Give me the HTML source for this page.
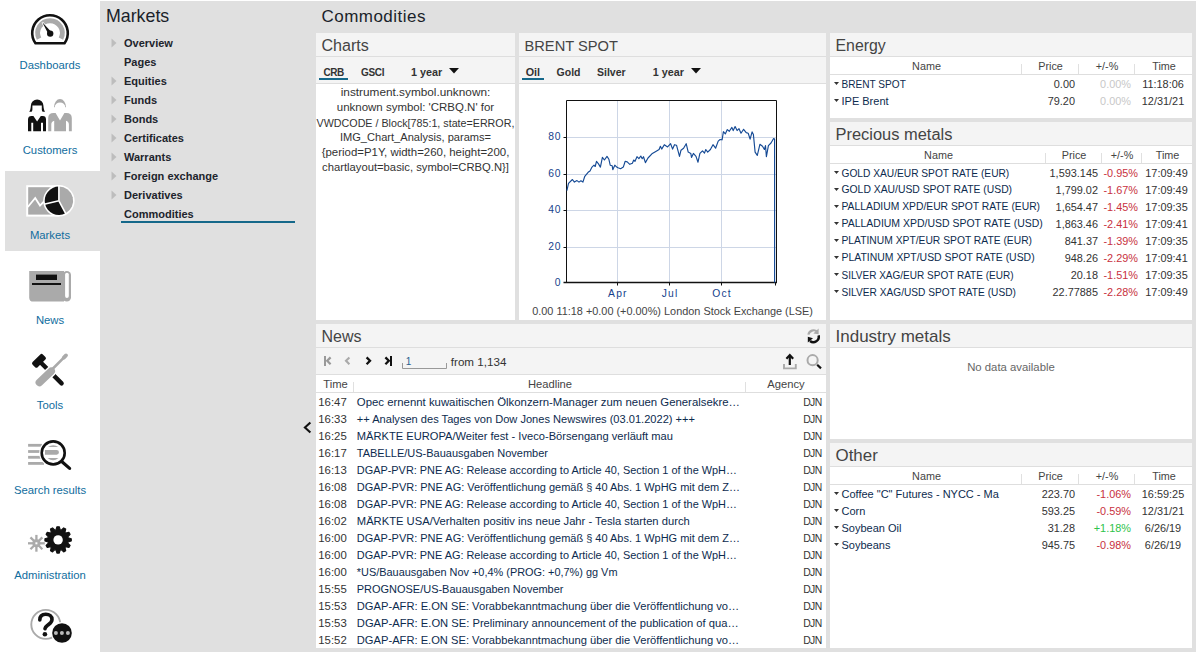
<!DOCTYPE html><html><head><meta charset="utf-8"><style>
html,body{margin:0;padding:0;}
body{width:1196px;height:652px;overflow:hidden;position:relative;background:#e0e0e0;font-family:"Liberation Sans",sans-serif;}
.t{position:absolute;white-space:nowrap;}
.r{position:absolute;}
svg{position:absolute;overflow:visible;}
</style></head><body>
<div class="r" style="left:0px;top:0px;width:100px;height:652px;background:#fff;"></div>
<div class="r" style="left:100px;top:0px;width:1096px;height:1px;background:#fff;"></div>
<div class="r" style="left:5px;top:171px;width:95px;height:80px;background:#e0e0e0;"></div>
<div class="t" style="left:-200px;width:500px;text-align:center;top:60.23px;font-size:11.3px;line-height:11.3px;color:#106d9e;font-weight:normal;">Dashboards</div>
<div class="t" style="left:-200px;width:500px;text-align:center;top:145.23px;font-size:11.3px;line-height:11.3px;color:#106d9e;font-weight:normal;">Customers</div>
<div class="t" style="left:-200px;width:500px;text-align:center;top:230.23px;font-size:11.3px;line-height:11.3px;color:#106d9e;font-weight:normal;">Markets</div>
<div class="t" style="left:-200px;width:500px;text-align:center;top:315.23px;font-size:11.3px;line-height:11.3px;color:#106d9e;font-weight:normal;">News</div>
<div class="t" style="left:-200px;width:500px;text-align:center;top:400.23px;font-size:11.3px;line-height:11.3px;color:#106d9e;font-weight:normal;">Tools</div>
<div class="t" style="left:-200px;width:500px;text-align:center;top:485.23px;font-size:11.3px;line-height:11.3px;color:#106d9e;font-weight:normal;">Search results</div>
<div class="t" style="left:-200px;width:500px;text-align:center;top:570.23px;font-size:11.3px;line-height:11.3px;color:#106d9e;font-weight:normal;">Administration</div>
<svg style="left:0;top:0" width="100" height="652">
<path d="M35.48 43.3 A17.8 17.8 0 1 1 64.52 43.3 Z" fill="#fff" stroke="#111" stroke-width="2.6" stroke-linejoin="round"/>
<path d="M39.04 38.58 A12.3 12.3 0 1 1 60.96 38.58" fill="none" stroke="#aaa" stroke-width="4.9"/>
<path d="M42.3 22.3 L51.6 32.2 L48.6 34.6 Z" fill="#fff" stroke="#fff" stroke-width="1.6"/><path d="M42.3 22.3 L51.6 32.2 L48.6 34.6 Z" fill="#111"/><circle cx="50.2" cy="33.6" r="3.2" fill="#111"/>
<path d="M29.2 111.8 C30.2 110.6 30.7 108.6 30.9 105.6 A6.25 6.1 0 0 1 43.4 105.6 C43.6 108.6 44.1 110.6 45.1 111.8 L42.6 111.8 C42.1 111.2 41.8 110.6 41.8 109.6 L41.8 105.6 L32.4 105.6 L32.4 109.6 C32.4 110.6 32.1 111.2 31.6 111.8 Z" fill="#111"/>
<path d="M28 131.2 L28 119.4 C28 117.2 29.4 116 31.4 116 L33.4 116 L37.1 121.4 L40.8 116 L42.8 116 C44.8 116 46 117.2 46 119.4 L46 131.2 L43 131.2 L43 122.8 L41 122.8 L41 131.2 L33.2 131.2 L33.2 122.8 L31.3 122.8 L31.3 131.2 Z" fill="#111"/>
<path d="M54 107.2 A6 8.2 0 0 1 66 107.2 L65.2 107.2 A5.2 4.8 0 0 0 54.8 107.2 Z" fill="#aaa"/>
<path d="M48.2 131.2 L48.2 118 C48.2 114.8 50.2 113 53.4 113 L55.6 113 L60 120.4 L64.4 113 L66.6 113 C69.8 113 71.8 114.8 71.8 118 L71.8 131.2 L68.9 131.2 L68.9 124.5 C68.9 122.5 67.6 121.2 66 120.8 L66 131.2 L54.2 131.2 L54.2 120.8 C52.6 121.2 51.3 122.5 51.3 124.5 L51.3 131.2 Z" fill="#aaa"/>
<rect x="26.2" y="185.2" width="33" height="31.4" fill="#fff"/><rect x="28.2" y="187.2" width="30" height="27.4" fill="#aaa"/>
<path d="M27.8 207 L35.2 198 L40 205.6 L44 201.5" fill="none" stroke="#fff" stroke-width="1.8"/>
<circle cx="58.9" cy="200.8" r="15.7" fill="#fff"/>
<path d="M58.9 200.8 L58.90 186.60 A14.2 14.2 0 0 1 65.57 213.34 Z" fill="#aaa"/>
<path d="M58.9 200.8 L65.57 213.34 A14.2 14.2 0 0 1 45.06 203.99 Z" fill="#111"/>
<path d="M58.9 200.8 L45.06 203.99 A14.2 14.2 0 0 1 58.90 186.60 Z" fill="#111"/>
<line x1="58.9" y1="200.8" x2="58.90" y2="185.60" stroke="#fff" stroke-width="1.6"/>
<line x1="58.9" y1="200.8" x2="66.04" y2="214.22" stroke="#fff" stroke-width="1.6"/>
<line x1="58.9" y1="200.8" x2="44.09" y2="204.22" stroke="#fff" stroke-width="1.6"/>
<path d="M29.2 270.9 L64 270.9 L64 301.6 L33.4 301.6 Q29.2 301.6 29.2 297.4 Z" fill="#aaa"/>
<rect x="62.6" y="270.9" width="8.4" height="30.7" rx="4.2" fill="#aaa"/>
<rect x="65.1" y="272.7" width="3.7" height="25.2" rx="1.85" fill="#fff"/>
<rect x="36" y="274.6" width="21" height="5.4" fill="#111"/><rect x="32" y="283" width="29" height="2" fill="#111"/>
<rect x="-7.25" y="-3.6" width="14.5" height="7.2" rx="1.8" fill="#111" transform="translate(39,360.8) rotate(-45)"/>
<line x1="40" y1="361.8" x2="61.6" y2="383.4" stroke="#111" stroke-width="4.4" stroke-linecap="round"/>
<line x1="65.4" y1="356" x2="50.5" y2="371" stroke="#fff" stroke-width="5.6" stroke-linecap="round"/>
<line x1="51.2" y1="371.2" x2="39.4" y2="382.4" stroke="#fff" stroke-width="10.4" stroke-linecap="round"/>
<line x1="65.6" y1="355.8" x2="50.5" y2="371" stroke="#aaa" stroke-width="2.6" stroke-linecap="round"/>
<line x1="66" y1="355.4" x2="63.8" y2="357.6" stroke="#aaa" stroke-width="3.8" stroke-linecap="round"/>
<line x1="51.2" y1="371.2" x2="39.4" y2="382.4" stroke="#aaa" stroke-width="7.6" stroke-linecap="round"/>
<rect x="28.1" y="443.9" width="13.9" height="2.8" fill="#aaa"/>
<rect x="28.1" y="450.1" width="13.9" height="2.8" fill="#aaa"/>
<rect x="28.1" y="455.9" width="13.9" height="2.8" fill="#aaa"/>
<rect x="28.1" y="462.0" width="15.9" height="2.8" fill="#aaa"/>
<circle cx="53.2" cy="452.9" r="14" fill="#fff"/>
<path d="M47.9 446.9 Q53.2 443.4 58.4 446.9 Z" fill="#aaa"/>
<path d="M45 450 L56.6 450 A2.35 2.35 0 0 1 56.6 454.7 L45 454.7 Z" fill="#aaa"/>
<path d="M47.5 458 L58.5 458 Q53 462.4 47.5 458 Z" fill="#aaa"/>
<circle cx="53.2" cy="452.9" r="11.5" fill="none" stroke="#111" stroke-width="2.6"/>
<line x1="62" y1="461.8" x2="69.6" y2="468.4" stroke="#111" stroke-width="3.2" stroke-linecap="round"/>
<line x1="36.4" y1="543.3" x2="44.80" y2="543.30" stroke="#aaa" stroke-width="2.3"/><line x1="36.4" y1="543.3" x2="42.34" y2="549.24" stroke="#aaa" stroke-width="2.3"/><line x1="36.4" y1="543.3" x2="36.40" y2="551.70" stroke="#aaa" stroke-width="2.3"/><line x1="36.4" y1="543.3" x2="30.46" y2="549.24" stroke="#aaa" stroke-width="2.3"/><line x1="36.4" y1="543.3" x2="28.00" y2="543.30" stroke="#aaa" stroke-width="2.3"/><line x1="36.4" y1="543.3" x2="30.46" y2="537.36" stroke="#aaa" stroke-width="2.3"/><line x1="36.4" y1="543.3" x2="36.40" y2="534.90" stroke="#aaa" stroke-width="2.3"/><line x1="36.4" y1="543.3" x2="42.34" y2="537.36" stroke="#aaa" stroke-width="2.3"/>
<circle cx="36.4" cy="543.3" r="4" fill="#aaa"/><rect x="35.4" y="542.3" width="2" height="2" fill="#fff"/>
<path d="M55.98 529.92 L56.95 526.75 L59.25 526.75 L60.22 529.92 L61.25 530.20 L63.68 527.94 L65.67 529.09 L64.93 532.32 L65.68 533.07 L68.91 532.33 L70.06 534.32 L67.80 536.75 L68.08 537.78 L71.25 538.75 L71.25 541.05 L68.08 542.02 L67.80 543.05 L70.06 545.48 L68.91 547.47 L65.68 546.73 L64.93 547.48 L65.67 550.71 L63.68 551.86 L61.25 549.60 L60.22 549.88 L59.25 553.05 L56.95 553.05 L55.98 549.88 L54.95 549.60 L52.52 551.86 L50.53 550.71 L51.27 547.48 L50.52 546.73 L47.29 547.47 L46.14 545.48 L48.40 543.05 L48.12 542.02 L44.95 541.05 L44.95 538.75 L48.12 537.78 L48.40 536.75 L46.14 534.32 L47.29 532.33 L50.52 533.07 L51.27 532.32 L50.53 529.09 L52.52 527.94 L54.95 530.20 Z" fill="#111" stroke="#111" stroke-width="1.2" stroke-linejoin="round"/><circle cx="58.1" cy="539.9" r="4.7" fill="#fff"/>
<circle cx="45.8" cy="624.4" r="14.5" fill="none" stroke="#aaa" stroke-width="1.9"/>
<path d="M39.8 620 C39.8 616.2 42.2 614.2 45.8 614.2 C49.4 614.2 52 616.4 52 619.4 C52 622.4 49.6 623.6 47.6 625.2 C46 626.4 45.2 627.4 45 628.6" fill="none" stroke="#111" stroke-width="3.6" stroke-linecap="round"/>
<circle cx="44.9" cy="634.2" r="2.3" fill="#111"/>
<circle cx="62" cy="633" r="11" fill="#fff"/><circle cx="62" cy="633" r="9.8" fill="#111"/>
<circle cx="55.9" cy="633" r="2" fill="#bbb"/>
<circle cx="61.9" cy="633" r="2" fill="#bbb"/>
<circle cx="67.9" cy="633" r="2" fill="#bbb"/>
</svg>
<div class="t" style="left:106px;top:7.93px;font-size:17.8px;line-height:17.8px;color:#1a1f2a;font-weight:normal;">Markets</div>
<div class="t" style="left:124px;top:37.69px;font-size:11px;line-height:11px;color:#20242c;font-weight:bold;">Overview</div>
<svg style="left:111px;top:37.7px" width="6" height="10"><path d="M0.5 0.5 L5.5 5 L0.5 9.5 Z" fill="#bdbdbd"/></svg>
<div class="t" style="left:124px;top:56.69px;font-size:11px;line-height:11px;color:#20242c;font-weight:bold;">Pages</div>
<div class="t" style="left:124px;top:75.69px;font-size:11px;line-height:11px;color:#20242c;font-weight:bold;">Equities</div>
<svg style="left:111px;top:75.7px" width="6" height="10"><path d="M0.5 0.5 L5.5 5 L0.5 9.5 Z" fill="#bdbdbd"/></svg>
<div class="t" style="left:124px;top:94.69px;font-size:11px;line-height:11px;color:#20242c;font-weight:bold;">Funds</div>
<svg style="left:111px;top:94.7px" width="6" height="10"><path d="M0.5 0.5 L5.5 5 L0.5 9.5 Z" fill="#bdbdbd"/></svg>
<div class="t" style="left:124px;top:113.69px;font-size:11px;line-height:11px;color:#20242c;font-weight:bold;">Bonds</div>
<svg style="left:111px;top:113.7px" width="6" height="10"><path d="M0.5 0.5 L5.5 5 L0.5 9.5 Z" fill="#bdbdbd"/></svg>
<div class="t" style="left:124px;top:132.69px;font-size:11px;line-height:11px;color:#20242c;font-weight:bold;">Certificates</div>
<svg style="left:111px;top:132.7px" width="6" height="10"><path d="M0.5 0.5 L5.5 5 L0.5 9.5 Z" fill="#bdbdbd"/></svg>
<div class="t" style="left:124px;top:151.69px;font-size:11px;line-height:11px;color:#20242c;font-weight:bold;">Warrants</div>
<svg style="left:111px;top:151.7px" width="6" height="10"><path d="M0.5 0.5 L5.5 5 L0.5 9.5 Z" fill="#bdbdbd"/></svg>
<div class="t" style="left:124px;top:170.69px;font-size:11px;line-height:11px;color:#20242c;font-weight:bold;">Foreign exchange</div>
<svg style="left:111px;top:170.7px" width="6" height="10"><path d="M0.5 0.5 L5.5 5 L0.5 9.5 Z" fill="#bdbdbd"/></svg>
<div class="t" style="left:124px;top:189.69px;font-size:11px;line-height:11px;color:#20242c;font-weight:bold;">Derivatives</div>
<svg style="left:111px;top:189.7px" width="6" height="10"><path d="M0.5 0.5 L5.5 5 L0.5 9.5 Z" fill="#bdbdbd"/></svg>
<div class="t" style="left:124px;top:208.69px;font-size:11px;line-height:11px;color:#20242c;font-weight:bold;">Commodities</div>
<div class="r" style="left:121px;top:221px;width:174px;height:2px;background:#15688a;"></div>
<div class="t" style="left:321.5px;top:8.11px;font-size:17px;line-height:17px;color:#1a1f2a;font-weight:normal;letter-spacing:0.47px;">Commodities</div>
<div class="r" style="left:316px;top:33px;width:199px;height:287px;background:#fff;"></div>
<div class="r" style="left:316px;top:33px;width:199px;height:23px;background:#f4f4f4;"></div>
<div class="r" style="left:316px;top:56px;width:199px;height:1px;background:#dedede;"></div>
<div class="t" style="left:321.5px;top:37.28px;font-size:16.09px;line-height:16.09px;color:#444;font-weight:normal;">Charts</div>
<div class="r" style="left:316px;top:57px;width:199px;height:26px;background:#f4f4f4;"></div>
<div class="r" style="left:316px;top:83px;width:199px;height:1px;background:#dedede;"></div>
<div class="t" style="left:323.4px;top:67.53px;font-size:10px;line-height:10px;color:#333;font-weight:bold;letter-spacing:-0.4px;">CRB</div>
<div class="t" style="left:361px;top:67.53px;font-size:10px;line-height:10px;color:#333;font-weight:bold;letter-spacing:-0.3px;">GSCI</div>
<div class="t" style="left:411px;top:66.86px;font-size:10.8px;line-height:10.8px;color:#333;font-weight:bold;">1 year</div>
<svg style="left:449px;top:68px" width="11" height="6"><path d="M0 0 L10 0 L5 5.5 Z" fill="#111"/></svg>
<div class="r" style="left:319px;top:78px;width:29px;height:2px;background:#15688a;"></div>
<div class="t" style="left:165.5px;width:500px;text-align:center;top:86.61px;font-size:11.8px;line-height:11.8px;color:#333;font-weight:normal;">instrument.symbol.unknown:</div>
<div class="t" style="left:165.5px;width:500px;text-align:center;top:101.89px;font-size:11.47px;line-height:11.47px;color:#333;font-weight:normal;">unknown symbol: 'CRBQ.N' for</div>
<div class="t" style="left:165.5px;width:500px;text-align:center;top:117.53px;font-size:10.71px;line-height:10.71px;color:#333;font-weight:normal;">VWDCODE / Block[785:1, state=ERROR,</div>
<div class="t" style="left:165.5px;width:500px;text-align:center;top:132.21px;font-size:11.09px;line-height:11.09px;color:#333;font-weight:normal;">IMG_Chart_Analysis, params=</div>
<div class="t" style="left:165.5px;width:500px;text-align:center;top:146.91px;font-size:11.45px;line-height:11.45px;color:#333;font-weight:normal;">{period=P1Y, width=260, height=200,</div>
<div class="t" style="left:165.5px;width:500px;text-align:center;top:162.08px;font-size:11.25px;line-height:11.25px;color:#333;font-weight:normal;">chartlayout=basic, symbol=CRBQ.N}]</div>
<div class="r" style="left:519px;top:33px;width:307px;height:287px;background:#fff;"></div>
<div class="r" style="left:519px;top:33px;width:307px;height:23px;background:#f4f4f4;"></div>
<div class="r" style="left:519px;top:56px;width:307px;height:1px;background:#dedede;"></div>
<div class="t" style="left:524.5px;top:39.48px;font-size:14.67px;line-height:14.67px;color:#444;font-weight:normal;">BRENT SPOT</div>
<div class="r" style="left:519px;top:57px;width:307px;height:26px;background:#f4f4f4;"></div>
<div class="r" style="left:519px;top:83px;width:307px;height:1px;background:#dedede;"></div>
<div class="t" style="left:525.7px;top:66.86px;font-size:10.8px;line-height:10.8px;color:#333;font-weight:bold;">Oil</div>
<div class="t" style="left:556.6px;top:67.11px;font-size:10.5px;line-height:10.5px;color:#333;font-weight:bold;">Gold</div>
<div class="t" style="left:597px;top:67.11px;font-size:10.5px;line-height:10.5px;color:#333;font-weight:bold;">Silver</div>
<div class="t" style="left:652.8px;top:66.86px;font-size:10.8px;line-height:10.8px;color:#333;font-weight:bold;">1 year</div>
<svg style="left:690.5px;top:68px" width="11" height="6"><path d="M0 0 L10 0 L5 5.5 Z" fill="#111"/></svg>
<div class="r" style="left:522px;top:78px;width:22px;height:2px;background:#15688a;"></div>
<svg style="left:0;top:0" width="1196" height="652"><line x1="566.5" y1="137.5" x2="776.5" y2="137.5" stroke="#cdd6e6" stroke-width="1"/><line x1="563.5" y1="137.5" x2="566.5" y2="137.5" stroke="#111" stroke-width="1"/><line x1="566.5" y1="174.5" x2="776.5" y2="174.5" stroke="#cdd6e6" stroke-width="1"/><line x1="563.5" y1="174.5" x2="566.5" y2="174.5" stroke="#111" stroke-width="1"/><line x1="566.5" y1="210.5" x2="776.5" y2="210.5" stroke="#cdd6e6" stroke-width="1"/><line x1="563.5" y1="210.5" x2="566.5" y2="210.5" stroke="#111" stroke-width="1"/><line x1="566.5" y1="247.5" x2="776.5" y2="247.5" stroke="#cdd6e6" stroke-width="1"/><line x1="563.5" y1="247.5" x2="566.5" y2="247.5" stroke="#111" stroke-width="1"/><line x1="617.5" y1="100.5" x2="617.5" y2="282.5" stroke="#cdd6e6" stroke-width="1"/><line x1="617.5" y1="282.5" x2="617.5" y2="285.5" stroke="#111" stroke-width="1"/><line x1="669.5" y1="100.5" x2="669.5" y2="282.5" stroke="#cdd6e6" stroke-width="1"/><line x1="669.5" y1="282.5" x2="669.5" y2="285.5" stroke="#111" stroke-width="1"/><line x1="721.5" y1="100.5" x2="721.5" y2="282.5" stroke="#cdd6e6" stroke-width="1"/><line x1="721.5" y1="282.5" x2="721.5" y2="285.5" stroke="#111" stroke-width="1"/><line x1="775.5" y1="282.5" x2="775.5" y2="285.5" stroke="#111" stroke-width="1"/>
<path d="M566.5 282.5 L566.5 100.5 L776.5 100.5 L776.5 282.5" fill="none" stroke="#111" stroke-width="1"/>
<line x1="563.5" y1="282.5" x2="777" y2="282.5" stroke="#111" stroke-width="1.6"/>
<path d="M566.9 190.6 L568.5 183.4 L572.4 179.5 L574.4 182.1 L577.0 180.6 L579.0 182.1 L580.9 180.8 L582.9 182.1 L584.8 176.3 L588.1 172.3 L590.0 171.0 L592.0 167.1 L594.0 165.2 L595.2 166.5 L596.5 161.3 L598.5 163.9 L600.4 167.1 L602.4 157.4 L604.4 160.0 L607.0 156.4 L608.9 159.3 L610.2 165.2 L612.2 165.8 L612.8 169.7 L614.8 165.2 L616.7 167.1 L618.0 167.8 L620.6 168.7 L623.3 167.1 L625.2 161.3 L627.2 161.9 L629.8 164.3 L632.4 163.2 L633.7 160.0 L635.0 161.3 L637.0 156.7 L638.9 158.7 L640.8 156.0 L642.2 158.7 L643.5 156.7 L645.4 162.6 L648.0 158.0 L651.9 153.8 L655.8 151.5 L659.1 149.5 L660.4 146.3 L661.7 149.1 L664.3 144.7 L667.6 146.9 L670.6 143.7 L672.6 149.1 L674.5 144.7 L676.5 145.2 L679.5 156.4 L681.0 150.2 L683.6 148.2 L686.2 143.7 L688.2 152.1 L690.8 153.4 L691.5 157.4 L693.4 153.4 L696.0 156.4 L698.0 162.2 L699.9 153.4 L702.5 150.8 L704.5 153.1 L705.8 149.5 L707.7 152.1 L710.4 149.5 L713.0 144.7 L715.6 148.2 L718.2 141.1 L720.1 139.5 L722.1 139.8 L723.4 131.7 L725.3 133.9 L727.3 129.6 L729.3 131.3 L731.9 127.4 L733.2 130.6 L735.1 126.5 L737.1 130.6 L739.0 128.7 L741.0 133.2 L743.6 129.3 L746.2 132.6 L748.2 133.2 L750.1 139.1 L752.1 131.9 L753.4 134.5 L755.1 152.1 L757.3 155.4 L759.9 144.3 L762.5 146.3 L764.4 149.5 L765.5 145.6 L766.4 156.7 L768.4 145.6 L771.0 143.0 L773.6 138.5 L774.6 139.1 L774.6 282.5" fill="none" stroke="#154a95" stroke-width="1.15" stroke-linejoin="round"/>
</svg>
<div class="t" style="right:634.8px;top:132.28px;font-size:10.3px;line-height:10.3px;color:#163f8c;font-weight:normal;letter-spacing:0.8px;">80</div>
<div class="t" style="right:634.8px;top:169.18px;font-size:10.3px;line-height:10.3px;color:#163f8c;font-weight:normal;letter-spacing:0.8px;">60</div>
<div class="t" style="right:634.8px;top:205.48px;font-size:10.3px;line-height:10.3px;color:#163f8c;font-weight:normal;letter-spacing:0.8px;">40</div>
<div class="t" style="right:634.8px;top:242.18px;font-size:10.3px;line-height:10.3px;color:#163f8c;font-weight:normal;letter-spacing:0.8px;">20</div>
<div class="t" style="right:634.8px;top:277.68px;font-size:10.3px;line-height:10.3px;color:#163f8c;font-weight:normal;letter-spacing:0.8px;">0</div>
<div class="t" style="left:367.9px;width:500px;text-align:center;top:288.88px;font-size:10.3px;line-height:10.3px;color:#163f8c;font-weight:normal;letter-spacing:1.2px;">Apr</div>
<div class="t" style="left:420.1px;width:500px;text-align:center;top:288.88px;font-size:10.3px;line-height:10.3px;color:#163f8c;font-weight:normal;letter-spacing:1.2px;">Jul</div>
<div class="t" style="left:472.1px;width:500px;text-align:center;top:288.88px;font-size:10.3px;line-height:10.3px;color:#163f8c;font-weight:normal;letter-spacing:1.2px;">Oct</div>
<div class="t" style="left:422.6px;width:500px;text-align:center;top:305.97px;font-size:10.9px;line-height:10.9px;color:#444;font-weight:normal;">0.00 11:18 +0.00 (+0.00%) London Stock Exchange (LSE)</div>
<div class="r" style="left:830px;top:33px;width:362px;height:85px;background:#fff;"></div>
<div class="r" style="left:830px;top:33px;width:362px;height:23px;background:#f4f4f4;"></div>
<div class="r" style="left:830px;top:56px;width:362px;height:1px;background:#dedede;"></div>
<div class="t" style="left:835.5px;top:38.46px;font-size:15.88px;line-height:15.88px;color:#444;font-weight:normal;">Energy</div>
<div class="r" style="left:830px;top:74px;width:362px;height:1px;background:#dedede;"></div>
<div class="r" style="left:1021px;top:64px;width:1px;height:10px;background:#e0e0e0;"></div>
<div class="r" style="left:1078px;top:64px;width:1px;height:10px;background:#e0e0e0;"></div>
<div class="r" style="left:1134px;top:64px;width:1px;height:10px;background:#e0e0e0;"></div>
<div class="t" style="left:676.5px;width:500px;text-align:center;top:60.66px;font-size:10.8px;line-height:10.8px;color:#444;font-weight:normal;">Name</div>
<div class="t" style="left:800.5px;width:500px;text-align:center;top:60.66px;font-size:10.8px;line-height:10.8px;color:#444;font-weight:normal;">Price</div>
<div class="t" style="left:857.0px;width:500px;text-align:center;top:60.66px;font-size:10.8px;line-height:10.8px;color:#444;font-weight:normal;">+/-%</div>
<div class="t" style="left:914.0px;width:500px;text-align:center;top:60.66px;font-size:10.8px;line-height:10.8px;color:#444;font-weight:normal;">Time</div>
<svg style="left:834px;top:81.7px" width="6" height="4"><path d="M0 0 L5 0 L2.5 3 Z" fill="#333"/></svg>
<div class="t" style="left:841.5px;top:79.65px;font-size:10.1px;line-height:10.1px;color:#0d2b4e;font-weight:normal;">BRENT SPOT</div>
<div class="t" style="right:121px;top:78.97px;font-size:10.9px;line-height:10.9px;color:#333;font-weight:normal;">0.00</div>
<div class="t" style="right:65px;top:78.97px;font-size:10.9px;line-height:10.9px;color:#c8c8c8;font-weight:normal;">0.00%</div>
<div class="t" style="left:913.0px;width:500px;text-align:center;top:78.97px;font-size:10.9px;line-height:10.9px;color:#333;font-weight:normal;">11:18:06</div>
<svg style="left:834px;top:98.7px" width="6" height="4"><path d="M0 0 L5 0 L2.5 3 Z" fill="#333"/></svg>
<div class="t" style="left:841.5px;top:95.89px;font-size:11px;line-height:11px;color:#0d2b4e;font-weight:normal;">IPE Brent</div>
<div class="t" style="right:121px;top:95.97px;font-size:10.9px;line-height:10.9px;color:#333;font-weight:normal;">79.20</div>
<div class="t" style="right:65px;top:95.97px;font-size:10.9px;line-height:10.9px;color:#c8c8c8;font-weight:normal;">0.00%</div>
<div class="t" style="left:913.0px;width:500px;text-align:center;top:95.97px;font-size:10.9px;line-height:10.9px;color:#333;font-weight:normal;">12/31/21</div>
<div class="r" style="left:830px;top:122px;width:362px;height:198px;background:#fff;"></div>
<div class="r" style="left:830px;top:122px;width:362px;height:23px;background:#f4f4f4;"></div>
<div class="r" style="left:830px;top:145px;width:362px;height:1px;background:#dedede;"></div>
<div class="t" style="left:835.5px;top:125.98px;font-size:16.45px;line-height:16.45px;color:#444;font-weight:normal;">Precious metals</div>
<div class="r" style="left:830px;top:163px;width:362px;height:1px;background:#dedede;"></div>
<div class="r" style="left:1045px;top:153px;width:1px;height:10px;background:#e0e0e0;"></div>
<div class="r" style="left:1101px;top:153px;width:1px;height:10px;background:#e0e0e0;"></div>
<div class="r" style="left:1141px;top:153px;width:1px;height:10px;background:#e0e0e0;"></div>
<div class="t" style="left:688.5px;width:500px;text-align:center;top:149.66px;font-size:10.8px;line-height:10.8px;color:#444;font-weight:normal;">Name</div>
<div class="t" style="left:824.0px;width:500px;text-align:center;top:149.66px;font-size:10.8px;line-height:10.8px;color:#444;font-weight:normal;">Price</div>
<div class="t" style="left:872.0px;width:500px;text-align:center;top:149.66px;font-size:10.8px;line-height:10.8px;color:#444;font-weight:normal;">+/-%</div>
<div class="t" style="left:917.5px;width:500px;text-align:center;top:149.66px;font-size:10.8px;line-height:10.8px;color:#444;font-weight:normal;">Time</div>
<svg style="left:834px;top:170.7px" width="6" height="4"><path d="M0 0 L5 0 L2.5 3 Z" fill="#333"/></svg>
<div class="t" style="left:841.5px;top:168.57px;font-size:10.2px;line-height:10.2px;color:#0d2b4e;font-weight:normal;">GOLD XAU/EUR SPOT RATE (EUR)</div>
<div class="t" style="right:98px;top:167.97px;font-size:10.9px;line-height:10.9px;color:#333;font-weight:normal;">1,593.145</div>
<div class="t" style="right:58px;top:167.97px;font-size:10.9px;line-height:10.9px;color:#c8313e;font-weight:normal;">-0.95%</div>
<div class="t" style="left:916.5px;width:500px;text-align:center;top:167.97px;font-size:10.9px;line-height:10.9px;color:#333;font-weight:normal;">17:09:49</div>
<svg style="left:834px;top:187.7px" width="6" height="4"><path d="M0 0 L5 0 L2.5 3 Z" fill="#333"/></svg>
<div class="t" style="left:841.5px;top:185.42px;font-size:10.37px;line-height:10.37px;color:#0d2b4e;font-weight:normal;">GOLD XAU/USD SPOT RATE (USD)</div>
<div class="t" style="right:98px;top:184.97px;font-size:10.9px;line-height:10.9px;color:#333;font-weight:normal;">1,799.02</div>
<div class="t" style="right:58px;top:184.97px;font-size:10.9px;line-height:10.9px;color:#c8313e;font-weight:normal;">-1.67%</div>
<div class="t" style="left:916.5px;width:500px;text-align:center;top:184.97px;font-size:10.9px;line-height:10.9px;color:#333;font-weight:normal;">17:09:49</div>
<svg style="left:834px;top:204.7px" width="6" height="4"><path d="M0 0 L5 0 L2.5 3 Z" fill="#333"/></svg>
<div class="t" style="left:841.5px;top:202.45px;font-size:10.34px;line-height:10.34px;color:#0d2b4e;font-weight:normal;">PALLADIUM XPD/EUR SPOT RATE (EUR)</div>
<div class="t" style="right:98px;top:201.97px;font-size:10.9px;line-height:10.9px;color:#333;font-weight:normal;">1,654.47</div>
<div class="t" style="right:58px;top:201.97px;font-size:10.9px;line-height:10.9px;color:#c8313e;font-weight:normal;">-1.45%</div>
<div class="t" style="left:916.5px;width:500px;text-align:center;top:201.97px;font-size:10.9px;line-height:10.9px;color:#333;font-weight:normal;">17:09:35</div>
<svg style="left:834px;top:221.7px" width="6" height="4"><path d="M0 0 L5 0 L2.5 3 Z" fill="#333"/></svg>
<div class="t" style="left:841.5px;top:219.34px;font-size:10.47px;line-height:10.47px;color:#0d2b4e;font-weight:normal;">PALLADIUM XPD/USD SPOT RATE (USD)</div>
<div class="t" style="right:98px;top:218.97px;font-size:10.9px;line-height:10.9px;color:#333;font-weight:normal;">1,863.46</div>
<div class="t" style="right:58px;top:218.97px;font-size:10.9px;line-height:10.9px;color:#c8313e;font-weight:normal;">-2.41%</div>
<div class="t" style="left:916.5px;width:500px;text-align:center;top:218.97px;font-size:10.9px;line-height:10.9px;color:#333;font-weight:normal;">17:09:41</div>
<svg style="left:834px;top:238.7px" width="6" height="4"><path d="M0 0 L5 0 L2.5 3 Z" fill="#333"/></svg>
<div class="t" style="left:841.5px;top:236.47px;font-size:10.31px;line-height:10.31px;color:#0d2b4e;font-weight:normal;">PLATINUM XPT/EUR SPOT RATE (EUR)</div>
<div class="t" style="right:98px;top:235.97px;font-size:10.9px;line-height:10.9px;color:#333;font-weight:normal;">841.37</div>
<div class="t" style="right:58px;top:235.97px;font-size:10.9px;line-height:10.9px;color:#c8313e;font-weight:normal;">-1.39%</div>
<div class="t" style="left:916.5px;width:500px;text-align:center;top:235.97px;font-size:10.9px;line-height:10.9px;color:#333;font-weight:normal;">17:09:35</div>
<svg style="left:834px;top:255.7px" width="6" height="4"><path d="M0 0 L5 0 L2.5 3 Z" fill="#333"/></svg>
<div class="t" style="left:841.5px;top:253.36px;font-size:10.44px;line-height:10.44px;color:#0d2b4e;font-weight:normal;">PLATINUM XPT/USD SPOT RATE (USD)</div>
<div class="t" style="right:98px;top:252.97px;font-size:10.9px;line-height:10.9px;color:#333;font-weight:normal;">948.26</div>
<div class="t" style="right:58px;top:252.97px;font-size:10.9px;line-height:10.9px;color:#c8313e;font-weight:normal;">-2.29%</div>
<div class="t" style="left:916.5px;width:500px;text-align:center;top:252.97px;font-size:10.9px;line-height:10.9px;color:#333;font-weight:normal;">17:09:41</div>
<svg style="left:834px;top:272.7px" width="6" height="4"><path d="M0 0 L5 0 L2.5 3 Z" fill="#333"/></svg>
<div class="t" style="left:841.5px;top:270.71px;font-size:10.03px;line-height:10.03px;color:#0d2b4e;font-weight:normal;">SILVER XAG/EUR SPOT RATE (EUR)</div>
<div class="t" style="right:98px;top:269.97px;font-size:10.9px;line-height:10.9px;color:#333;font-weight:normal;">20.18</div>
<div class="t" style="right:58px;top:269.97px;font-size:10.9px;line-height:10.9px;color:#c8313e;font-weight:normal;">-1.51%</div>
<div class="t" style="left:916.5px;width:500px;text-align:center;top:269.97px;font-size:10.9px;line-height:10.9px;color:#333;font-weight:normal;">17:09:35</div>
<svg style="left:834px;top:289.7px" width="6" height="4"><path d="M0 0 L5 0 L2.5 3 Z" fill="#333"/></svg>
<div class="t" style="left:841.5px;top:287.59px;font-size:10.17px;line-height:10.17px;color:#0d2b4e;font-weight:normal;">SILVER XAG/USD SPOT RATE (USD)</div>
<div class="t" style="right:98px;top:286.97px;font-size:10.9px;line-height:10.9px;color:#333;font-weight:normal;">22.77885</div>
<div class="t" style="right:58px;top:286.97px;font-size:10.9px;line-height:10.9px;color:#c8313e;font-weight:normal;">-2.28%</div>
<div class="t" style="left:916.5px;width:500px;text-align:center;top:286.97px;font-size:10.9px;line-height:10.9px;color:#333;font-weight:normal;">17:09:49</div>
<div class="r" style="left:830px;top:443px;width:362px;height:205px;background:#fff;"></div>
<div class="r" style="left:830px;top:443px;width:362px;height:23px;background:#f4f4f4;"></div>
<div class="r" style="left:830px;top:466px;width:362px;height:1px;background:#dedede;"></div>
<div class="t" style="left:835.5px;top:447.59px;font-size:16.91px;line-height:16.91px;color:#444;font-weight:normal;">Other</div>
<div class="r" style="left:830px;top:484px;width:362px;height:1px;background:#dedede;"></div>
<div class="r" style="left:1021px;top:474px;width:1px;height:10px;background:#e0e0e0;"></div>
<div class="r" style="left:1078px;top:474px;width:1px;height:10px;background:#e0e0e0;"></div>
<div class="r" style="left:1134px;top:474px;width:1px;height:10px;background:#e0e0e0;"></div>
<div class="t" style="left:676.5px;width:500px;text-align:center;top:470.66px;font-size:10.8px;line-height:10.8px;color:#444;font-weight:normal;">Name</div>
<div class="t" style="left:800.5px;width:500px;text-align:center;top:470.66px;font-size:10.8px;line-height:10.8px;color:#444;font-weight:normal;">Price</div>
<div class="t" style="left:857.0px;width:500px;text-align:center;top:470.66px;font-size:10.8px;line-height:10.8px;color:#444;font-weight:normal;">+/-%</div>
<div class="t" style="left:914.0px;width:500px;text-align:center;top:470.66px;font-size:10.8px;line-height:10.8px;color:#444;font-weight:normal;">Time</div>
<svg style="left:834px;top:491.7px" width="6" height="4"><path d="M0 0 L5 0 L2.5 3 Z" fill="#333"/></svg>
<div class="t" style="left:841.5px;top:488.89px;font-size:11px;line-height:11px;color:#0d2b4e;font-weight:normal;">Coffee "C" Futures - NYCC - Ma</div>
<div class="t" style="right:121px;top:488.97px;font-size:10.9px;line-height:10.9px;color:#333;font-weight:normal;">223.70</div>
<div class="t" style="right:65px;top:488.97px;font-size:10.9px;line-height:10.9px;color:#c8313e;font-weight:normal;">-1.06%</div>
<div class="t" style="left:913.0px;width:500px;text-align:center;top:488.97px;font-size:10.9px;line-height:10.9px;color:#333;font-weight:normal;">16:59:25</div>
<svg style="left:834px;top:508.70000000000005px" width="6" height="4"><path d="M0 0 L5 0 L2.5 3 Z" fill="#333"/></svg>
<div class="t" style="left:841.5px;top:505.89px;font-size:11px;line-height:11px;color:#0d2b4e;font-weight:normal;">Corn</div>
<div class="t" style="right:121px;top:505.97px;font-size:10.9px;line-height:10.9px;color:#333;font-weight:normal;">593.25</div>
<div class="t" style="right:65px;top:505.97px;font-size:10.9px;line-height:10.9px;color:#c8313e;font-weight:normal;">-0.59%</div>
<div class="t" style="left:913.0px;width:500px;text-align:center;top:505.97px;font-size:10.9px;line-height:10.9px;color:#333;font-weight:normal;">12/31/21</div>
<svg style="left:834px;top:525.7px" width="6" height="4"><path d="M0 0 L5 0 L2.5 3 Z" fill="#333"/></svg>
<div class="t" style="left:841.5px;top:522.89px;font-size:11px;line-height:11px;color:#0d2b4e;font-weight:normal;">Soybean Oil</div>
<div class="t" style="right:121px;top:522.97px;font-size:10.9px;line-height:10.9px;color:#333;font-weight:normal;">31.28</div>
<div class="t" style="right:65px;top:522.97px;font-size:10.9px;line-height:10.9px;color:#2ec34a;font-weight:normal;">+1.18%</div>
<div class="t" style="left:913.0px;width:500px;text-align:center;top:522.97px;font-size:10.9px;line-height:10.9px;color:#333;font-weight:normal;">6/26/19</div>
<svg style="left:834px;top:542.7px" width="6" height="4"><path d="M0 0 L5 0 L2.5 3 Z" fill="#333"/></svg>
<div class="t" style="left:841.5px;top:539.89px;font-size:11px;line-height:11px;color:#0d2b4e;font-weight:normal;">Soybeans</div>
<div class="t" style="right:121px;top:539.97px;font-size:10.9px;line-height:10.9px;color:#333;font-weight:normal;">945.75</div>
<div class="t" style="right:65px;top:539.97px;font-size:10.9px;line-height:10.9px;color:#c8313e;font-weight:normal;">-0.98%</div>
<div class="t" style="left:913.0px;width:500px;text-align:center;top:539.97px;font-size:10.9px;line-height:10.9px;color:#333;font-weight:normal;">6/26/19</div>
<div class="r" style="left:830px;top:324px;width:362px;height:115px;background:#fff;"></div>
<div class="r" style="left:830px;top:324px;width:362px;height:23px;background:#f4f4f4;"></div>
<div class="r" style="left:830px;top:347px;width:362px;height:1px;background:#dedede;"></div>
<div class="t" style="left:835.5px;top:327.50px;font-size:17.01px;line-height:17.01px;color:#444;font-weight:normal;">Industry metals</div>
<div class="t" style="left:761px;width:500px;text-align:center;top:362.19px;font-size:11.35px;line-height:11.35px;color:#666;font-weight:normal;">No data available</div>
<div class="r" style="left:316px;top:324px;width:510px;height:324px;background:#fff;"></div>
<div class="r" style="left:316px;top:324px;width:510px;height:23px;background:#f4f4f4;"></div>
<div class="r" style="left:316px;top:347px;width:510px;height:1px;background:#dedede;"></div>
<div class="t" style="left:321.5px;top:329.36px;font-size:16.0px;line-height:16.0px;color:#444;font-weight:normal;">News</div>
<div class="r" style="left:316px;top:348px;width:510px;height:26px;background:#f4f4f4;"></div>
<div class="r" style="left:316px;top:374px;width:510px;height:1px;background:#dedede;"></div>
<div class="r" style="left:316px;top:392px;width:510px;height:1px;background:#dedede;"></div>
<div class="r" style="left:353px;top:382px;width:1px;height:10px;background:#e0e0e0;"></div>
<div class="r" style="left:745px;top:382px;width:1px;height:10px;background:#e0e0e0;"></div>
<div class="t" style="left:85.5px;width:500px;text-align:center;top:378.72px;font-size:11.2px;line-height:11.2px;color:#444;font-weight:normal;">Time</div>
<div class="t" style="left:300px;width:500px;text-align:center;top:378.72px;font-size:11.2px;line-height:11.2px;color:#444;font-weight:normal;">Headline</div>
<div class="t" style="left:536px;width:500px;text-align:center;top:378.72px;font-size:11.2px;line-height:11.2px;color:#444;font-weight:normal;">Agency</div>
<div class="t" style="left:405.7px;top:357.04px;font-size:10px;line-height:10px;color:#2a5f8f;font-weight:normal;">1</div>
<svg style="left:0;top:0" width="1196" height="652"><path d="M402.5 363 L402.5 368.5 L446.5 368.5 L446.5 363" fill="none" stroke="#999" stroke-width="1"/></svg>
<div class="t" style="left:450.8px;top:356.16px;font-size:11.63px;line-height:11.63px;color:#333;font-weight:normal;">from 1,134</div>
<div class="t" style="left:318.3px;top:396.86px;font-size:11.39px;line-height:11.39px;color:#333;font-weight:normal;">16:47</div>
<div class="t" style="left:356.8px;top:396.86px;font-size:11.39px;line-height:11.39px;color:#0d2b4e;font-weight:normal;">Opec ernennt kuwaitischen Ölkonzern-Manager zum neuen Generalsekre&hellip;</div>
<div class="t" style="right:374.4px;top:397.70px;font-size:10.4px;line-height:10.4px;color:#333;font-weight:normal;letter-spacing:-0.6px;">DJN</div>
<div class="t" style="left:318.3px;top:413.86px;font-size:11.39px;line-height:11.39px;color:#333;font-weight:normal;">16:33</div>
<div class="t" style="left:356.8px;top:414.12px;font-size:11.08px;line-height:11.08px;color:#0d2b4e;font-weight:normal;">++ Analysen des Tages von Dow Jones Newswires (03.01.2022) +++</div>
<div class="t" style="right:374.4px;top:414.70px;font-size:10.4px;line-height:10.4px;color:#333;font-weight:normal;letter-spacing:-0.6px;">DJN</div>
<div class="t" style="left:318.3px;top:430.86px;font-size:11.39px;line-height:11.39px;color:#333;font-weight:normal;">16:25</div>
<div class="t" style="left:356.8px;top:431.07px;font-size:11.14px;line-height:11.14px;color:#0d2b4e;font-weight:normal;">MÄRKTE EUROPA/Weiter fest - Iveco-Börsengang verläuft mau</div>
<div class="t" style="right:374.4px;top:431.70px;font-size:10.4px;line-height:10.4px;color:#333;font-weight:normal;letter-spacing:-0.6px;">DJN</div>
<div class="t" style="left:318.3px;top:447.86px;font-size:11.39px;line-height:11.39px;color:#333;font-weight:normal;">16:17</div>
<div class="t" style="left:356.8px;top:448.18px;font-size:11.01px;line-height:11.01px;color:#0d2b4e;font-weight:normal;">TABELLE/US-Bauausgaben November</div>
<div class="t" style="right:374.4px;top:448.70px;font-size:10.4px;line-height:10.4px;color:#333;font-weight:normal;letter-spacing:-0.6px;">DJN</div>
<div class="t" style="left:318.3px;top:464.86px;font-size:11.39px;line-height:11.39px;color:#333;font-weight:normal;">16:13</div>
<div class="t" style="left:356.8px;top:465.26px;font-size:10.91px;line-height:10.91px;color:#0d2b4e;font-weight:normal;">DGAP-PVR: PNE AG: Release according to Article 40, Section 1 of the WpH&hellip;</div>
<div class="t" style="right:374.4px;top:465.70px;font-size:10.4px;line-height:10.4px;color:#333;font-weight:normal;letter-spacing:-0.6px;">DJN</div>
<div class="t" style="left:318.3px;top:481.86px;font-size:11.39px;line-height:11.39px;color:#333;font-weight:normal;">16:08</div>
<div class="t" style="left:356.8px;top:482.20px;font-size:10.99px;line-height:10.99px;color:#0d2b4e;font-weight:normal;">DGAP-PVR: PNE AG: Veröffentlichung gemäß § 40 Abs. 1 WpHG mit dem Z&hellip;</div>
<div class="t" style="right:374.4px;top:482.70px;font-size:10.4px;line-height:10.4px;color:#333;font-weight:normal;letter-spacing:-0.6px;">DJN</div>
<div class="t" style="left:318.3px;top:498.86px;font-size:11.39px;line-height:11.39px;color:#333;font-weight:normal;">16:08</div>
<div class="t" style="left:356.8px;top:499.26px;font-size:10.91px;line-height:10.91px;color:#0d2b4e;font-weight:normal;">DGAP-PVR: PNE AG: Release according to Article 40, Section 1 of the WpH&hellip;</div>
<div class="t" style="right:374.4px;top:499.70px;font-size:10.4px;line-height:10.4px;color:#333;font-weight:normal;letter-spacing:-0.6px;">DJN</div>
<div class="t" style="left:318.3px;top:515.86px;font-size:11.39px;line-height:11.39px;color:#333;font-weight:normal;">16:02</div>
<div class="t" style="left:356.8px;top:516.01px;font-size:11.21px;line-height:11.21px;color:#0d2b4e;font-weight:normal;">MÄRKTE USA/Verhalten positiv ins neue Jahr - Tesla starten durch</div>
<div class="t" style="right:374.4px;top:516.70px;font-size:10.4px;line-height:10.4px;color:#333;font-weight:normal;letter-spacing:-0.6px;">DJN</div>
<div class="t" style="left:318.3px;top:532.86px;font-size:11.39px;line-height:11.39px;color:#333;font-weight:normal;">16:00</div>
<div class="t" style="left:356.8px;top:533.20px;font-size:10.99px;line-height:10.99px;color:#0d2b4e;font-weight:normal;">DGAP-PVR: PNE AG: Veröffentlichung gemäß § 40 Abs. 1 WpHG mit dem Z&hellip;</div>
<div class="t" style="right:374.4px;top:533.70px;font-size:10.4px;line-height:10.4px;color:#333;font-weight:normal;letter-spacing:-0.6px;">DJN</div>
<div class="t" style="left:318.3px;top:549.86px;font-size:11.39px;line-height:11.39px;color:#333;font-weight:normal;">16:00</div>
<div class="t" style="left:356.8px;top:550.26px;font-size:10.91px;line-height:10.91px;color:#0d2b4e;font-weight:normal;">DGAP-PVR: PNE AG: Release according to Article 40, Section 1 of the WpH&hellip;</div>
<div class="t" style="right:374.4px;top:550.70px;font-size:10.4px;line-height:10.4px;color:#333;font-weight:normal;letter-spacing:-0.6px;">DJN</div>
<div class="t" style="left:318.3px;top:566.86px;font-size:11.39px;line-height:11.39px;color:#333;font-weight:normal;">16:00</div>
<div class="t" style="left:356.8px;top:567.26px;font-size:10.92px;line-height:10.92px;color:#0d2b4e;font-weight:normal;">*US/Bauausgaben Nov +0,4% (PROG: +0,7%) gg Vm</div>
<div class="t" style="right:374.4px;top:567.70px;font-size:10.4px;line-height:10.4px;color:#333;font-weight:normal;letter-spacing:-0.6px;">DJN</div>
<div class="t" style="left:318.3px;top:583.86px;font-size:11.39px;line-height:11.39px;color:#333;font-weight:normal;">15:55</div>
<div class="t" style="left:356.8px;top:584.21px;font-size:10.98px;line-height:10.98px;color:#0d2b4e;font-weight:normal;">PROGNOSE/US-Bauausgaben November</div>
<div class="t" style="right:374.4px;top:584.70px;font-size:10.4px;line-height:10.4px;color:#333;font-weight:normal;letter-spacing:-0.6px;">DJN</div>
<div class="t" style="left:318.3px;top:600.86px;font-size:11.39px;line-height:11.39px;color:#333;font-weight:normal;">15:53</div>
<div class="t" style="left:356.8px;top:601.04px;font-size:11.17px;line-height:11.17px;color:#0d2b4e;font-weight:normal;">DGAP-AFR: E.ON SE: Vorabbekanntmachung über die Veröffentlichung vo&hellip;</div>
<div class="t" style="right:374.4px;top:601.70px;font-size:10.4px;line-height:10.4px;color:#333;font-weight:normal;letter-spacing:-0.6px;">DJN</div>
<div class="t" style="left:318.3px;top:617.86px;font-size:11.39px;line-height:11.39px;color:#333;font-weight:normal;">15:53</div>
<div class="t" style="left:356.8px;top:618.03px;font-size:11.19px;line-height:11.19px;color:#0d2b4e;font-weight:normal;">DGAP-AFR: E.ON SE: Preliminary announcement of the publication of qua&hellip;</div>
<div class="t" style="right:374.4px;top:618.70px;font-size:10.4px;line-height:10.4px;color:#333;font-weight:normal;letter-spacing:-0.6px;">DJN</div>
<div class="t" style="left:318.3px;top:634.86px;font-size:11.39px;line-height:11.39px;color:#333;font-weight:normal;">15:52</div>
<div class="t" style="left:356.8px;top:635.04px;font-size:11.17px;line-height:11.17px;color:#0d2b4e;font-weight:normal;">DGAP-AFR: E.ON SE: Vorabbekanntmachung über die Veröffentlichung vo&hellip;</div>
<div class="t" style="right:374.4px;top:635.70px;font-size:10.4px;line-height:10.4px;color:#333;font-weight:normal;letter-spacing:-0.6px;">DJN</div>
<svg style="left:0;top:0" width="1196" height="652">
<path d="M325 356 L325 366" stroke="#999" stroke-width="2"/><path d="M330.6 357.4 L327.2 360.8 L330.6 364.2" fill="none" stroke="#999" stroke-width="2.2"/>
<path d="M349.4 357.4 L346 360.8 L349.4 364.2" fill="none" stroke="#aaa" stroke-width="2.1"/>
<path d="M366.6 357.4 L370 360.8 L366.6 364.2" fill="none" stroke="#111" stroke-width="2.3"/>
<path d="M385.4 357.4 L388.8 360.8 L385.4 364.2" fill="none" stroke="#111" stroke-width="2.3"/><path d="M391 356 L391 366" stroke="#111" stroke-width="2"/>
<path d="M808.4 334.6 A5.4 5.4 0 0 1 817.2 331.6" fill="none" stroke="#aaa" stroke-width="2.2"/><path d="M818.6 328.6 L818.6 334.2 L813.4 333.6 Z" fill="#aaa"/>
<path d="M818.6 335.4 A5.4 5.4 0 0 1 810 341" fill="none" stroke="#111" stroke-width="2.5"/><path d="M807.8 342.6 L807.8 336.8 L813 338.2 Z" fill="#111"/>
<path d="M789.8 365 L789.8 356.2" stroke="#111" stroke-width="2.2"/><path d="M786.4 358.8 L789.8 355.2 L793.2 358.8" fill="none" stroke="#111" stroke-width="2.2"/>
<path d="M784 364 L784 368.4 L795.8 368.4 L795.8 364" fill="none" stroke="#aaa" stroke-width="1.9"/>
<circle cx="812.6" cy="360.2" r="5.1" fill="none" stroke="#aaa" stroke-width="2"/><path d="M817.2 364.8 L821 368.4" stroke="#111" stroke-width="2.2"/>
<path d="M310.4 422.4 L304.9 427.5 L310.4 432.6" fill="none" stroke="#111" stroke-width="2.1"/>
</svg>
</body></html>
